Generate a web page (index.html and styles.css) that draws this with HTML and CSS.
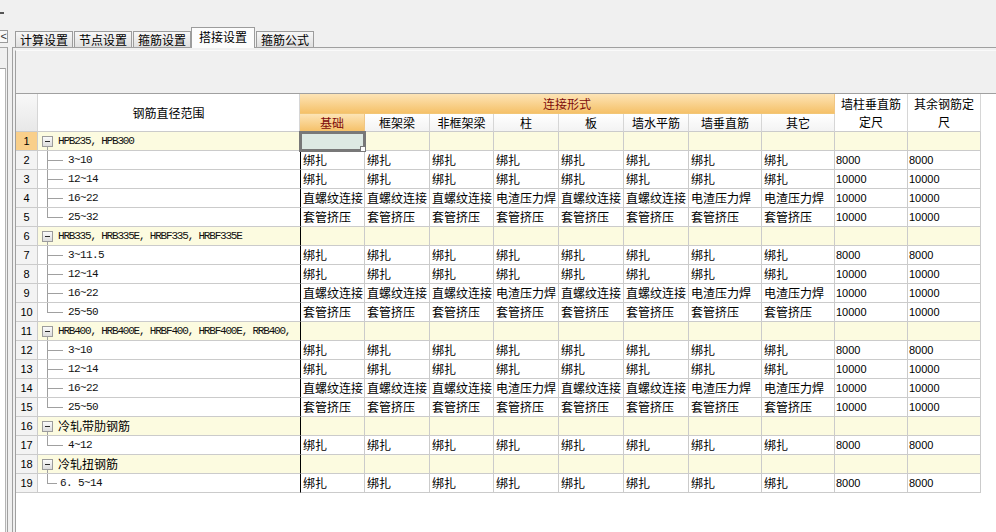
FILE: index.html
```html
<!DOCTYPE html>
<html lang="zh-CN">
<head>
<meta charset="utf-8">
<title>搭接设置</title>
<link rel="stylesheet" href="styles.css">
</head>
<body>
<div class="app">
  <div class="top"><span class="mark"></span></div>
  <div class="work">
    <div class="side">
      <div class="side-btn">&lt;</div>
      <div class="side-panel"><div class="side-list"></div></div>
    </div>
    <div class="tabs-area">
      <div class="tabstrip">
        <div class="tab">计算设置</div>
        <div class="tab">节点设置</div>
        <div class="tab">箍筋设置</div>
        <div class="tab active">搭接设置</div>
        <div class="tab">箍筋公式</div>
      </div>
      <div class="tabpanel">
        <div class="inner">
          <div class="toolbar"></div>
          <div class="gridwrap">
            <div class="grid">
              <div class="c h h-rn"></div>
              <div class="c h h-nm">钢筋直径范围</div>
              <div class="c h h-band org">连接形式</div>
              <div class="c h h-tall"><span>墙柱垂直筋<br>定尺</span></div>
              <div class="c h h-tall"><span>其余钢筋定<br>尺</span></div>
              <div class="c h org">基础</div>
              <div class="c h">框架梁</div>
              <div class="c h">非框架梁</div>
              <div class="c h">柱</div>
              <div class="c h">板</div>
              <div class="c h">墙水平筋</div>
              <div class="c h">墙垂直筋</div>
              <div class="c h">其它</div>

              <!-- 1 -->
              <div class="c rn cur">1</div>
              <div class="c nm g"><span class="tg"><i class="bx"></i></span><span class="lt">HPB235, HPB300</span></div>
              <div class="c d1 g sel"></div><div class="c g"></div><div class="c g"></div><div class="c g"></div><div class="c g"></div><div class="c g"></div><div class="c g"></div><div class="c g"></div><div class="c g"></div><div class="c g"></div>
              <!-- 2 -->
              <div class="c rn">2</div>
              <div class="c nm"><i class="br"></i><span class="lt ch">3~10</span></div>
              <div class="c d1">绑扎</div><div class="c">绑扎</div><div class="c">绑扎</div><div class="c">绑扎</div><div class="c">绑扎</div><div class="c">绑扎</div><div class="c">绑扎</div><div class="c">绑扎</div><div class="c n">8000</div><div class="c n">8000</div>
              <!-- 3 -->
              <div class="c rn">3</div>
              <div class="c nm"><i class="br"></i><span class="lt ch">12~14</span></div>
              <div class="c d1">绑扎</div><div class="c">绑扎</div><div class="c">绑扎</div><div class="c">绑扎</div><div class="c">绑扎</div><div class="c">绑扎</div><div class="c">绑扎</div><div class="c">绑扎</div><div class="c n">10000</div><div class="c n">10000</div>
              <!-- 4 -->
              <div class="c rn">4</div>
              <div class="c nm"><i class="br"></i><span class="lt ch">16~22</span></div>
              <div class="c d1">直螺纹连接</div><div class="c">直螺纹连接</div><div class="c">直螺纹连接</div><div class="c">电渣压力焊</div><div class="c">直螺纹连接</div><div class="c">直螺纹连接</div><div class="c">电渣压力焊</div><div class="c">电渣压力焊</div><div class="c n">10000</div><div class="c n">10000</div>
              <!-- 5 -->
              <div class="c rn">5</div>
              <div class="c nm"><i class="br last"></i><span class="lt ch">25~32</span></div>
              <div class="c d1">套管挤压</div><div class="c">套管挤压</div><div class="c">套管挤压</div><div class="c">套管挤压</div><div class="c">套管挤压</div><div class="c">套管挤压</div><div class="c">套管挤压</div><div class="c">套管挤压</div><div class="c n">10000</div><div class="c n">10000</div>
              <!-- 6 -->
              <div class="c rn">6</div>
              <div class="c nm g"><span class="tg"><i class="bx"></i></span><span class="lt">HRB335, HRB335E, HRBF335, HRBF335E</span></div>
              <div class="c d1 g"></div><div class="c g"></div><div class="c g"></div><div class="c g"></div><div class="c g"></div><div class="c g"></div><div class="c g"></div><div class="c g"></div><div class="c g"></div><div class="c g"></div>
              <!-- 7 -->
              <div class="c rn">7</div>
              <div class="c nm"><i class="br"></i><span class="lt ch">3~11.5</span></div>
              <div class="c d1">绑扎</div><div class="c">绑扎</div><div class="c">绑扎</div><div class="c">绑扎</div><div class="c">绑扎</div><div class="c">绑扎</div><div class="c">绑扎</div><div class="c">绑扎</div><div class="c n">8000</div><div class="c n">8000</div>
              <!-- 8 -->
              <div class="c rn">8</div>
              <div class="c nm"><i class="br"></i><span class="lt ch">12~14</span></div>
              <div class="c d1">绑扎</div><div class="c">绑扎</div><div class="c">绑扎</div><div class="c">绑扎</div><div class="c">绑扎</div><div class="c">绑扎</div><div class="c">绑扎</div><div class="c">绑扎</div><div class="c n">10000</div><div class="c n">10000</div>
              <!-- 9 -->
              <div class="c rn">9</div>
              <div class="c nm"><i class="br"></i><span class="lt ch">16~22</span></div>
              <div class="c d1">直螺纹连接</div><div class="c">直螺纹连接</div><div class="c">直螺纹连接</div><div class="c">电渣压力焊</div><div class="c">直螺纹连接</div><div class="c">直螺纹连接</div><div class="c">电渣压力焊</div><div class="c">电渣压力焊</div><div class="c n">10000</div><div class="c n">10000</div>
              <!-- 10 -->
              <div class="c rn">10</div>
              <div class="c nm"><i class="br last"></i><span class="lt ch">25~50</span></div>
              <div class="c d1">套管挤压</div><div class="c">套管挤压</div><div class="c">套管挤压</div><div class="c">套管挤压</div><div class="c">套管挤压</div><div class="c">套管挤压</div><div class="c">套管挤压</div><div class="c">套管挤压</div><div class="c n">10000</div><div class="c n">10000</div>
              <!-- 11 -->
              <div class="c rn">11</div>
              <div class="c nm g"><span class="tg"><i class="bx"></i></span><span class="lt">HRB400, HRB400E, HRBF400, HRBF400E, RRB400,</span></div>
              <div class="c d1 g"></div><div class="c g"></div><div class="c g"></div><div class="c g"></div><div class="c g"></div><div class="c g"></div><div class="c g"></div><div class="c g"></div><div class="c g"></div><div class="c g"></div>
              <!-- 12 -->
              <div class="c rn">12</div>
              <div class="c nm"><i class="br"></i><span class="lt ch">3~10</span></div>
              <div class="c d1">绑扎</div><div class="c">绑扎</div><div class="c">绑扎</div><div class="c">绑扎</div><div class="c">绑扎</div><div class="c">绑扎</div><div class="c">绑扎</div><div class="c">绑扎</div><div class="c n">8000</div><div class="c n">8000</div>
              <!-- 13 -->
              <div class="c rn">13</div>
              <div class="c nm"><i class="br"></i><span class="lt ch">12~14</span></div>
              <div class="c d1">绑扎</div><div class="c">绑扎</div><div class="c">绑扎</div><div class="c">绑扎</div><div class="c">绑扎</div><div class="c">绑扎</div><div class="c">绑扎</div><div class="c">绑扎</div><div class="c n">10000</div><div class="c n">10000</div>
              <!-- 14 -->
              <div class="c rn">14</div>
              <div class="c nm"><i class="br"></i><span class="lt ch">16~22</span></div>
              <div class="c d1">直螺纹连接</div><div class="c">直螺纹连接</div><div class="c">直螺纹连接</div><div class="c">电渣压力焊</div><div class="c">直螺纹连接</div><div class="c">直螺纹连接</div><div class="c">电渣压力焊</div><div class="c">电渣压力焊</div><div class="c n">10000</div><div class="c n">10000</div>
              <!-- 15 -->
              <div class="c rn">15</div>
              <div class="c nm"><i class="br last"></i><span class="lt ch">25~50</span></div>
              <div class="c d1">套管挤压</div><div class="c">套管挤压</div><div class="c">套管挤压</div><div class="c">套管挤压</div><div class="c">套管挤压</div><div class="c">套管挤压</div><div class="c">套管挤压</div><div class="c">套管挤压</div><div class="c n">10000</div><div class="c n">10000</div>
              <!-- 16 -->
              <div class="c rn">16</div>
              <div class="c nm g"><span class="tg"><i class="bx"></i></span><span>冷轧带肋钢筋</span></div>
              <div class="c d1 g"></div><div class="c g"></div><div class="c g"></div><div class="c g"></div><div class="c g"></div><div class="c g"></div><div class="c g"></div><div class="c g"></div><div class="c g"></div><div class="c g"></div>
              <!-- 17 -->
              <div class="c rn">17</div>
              <div class="c nm"><i class="br last"></i><span class="lt ch">4~12</span></div>
              <div class="c d1">绑扎</div><div class="c">绑扎</div><div class="c">绑扎</div><div class="c">绑扎</div><div class="c">绑扎</div><div class="c">绑扎</div><div class="c">绑扎</div><div class="c">绑扎</div><div class="c n">8000</div><div class="c n">8000</div>
              <!-- 18 -->
              <div class="c rn">18</div>
              <div class="c nm g"><span class="tg"><i class="bx"></i></span><span>冷轧扭钢筋</span></div>
              <div class="c d1 g"></div><div class="c g"></div><div class="c g"></div><div class="c g"></div><div class="c g"></div><div class="c g"></div><div class="c g"></div><div class="c g"></div><div class="c g"></div><div class="c g"></div>
              <!-- 19 -->
              <div class="c rn">19</div>
              <div class="c nm"><i class="br last short"></i><span class="lt ch">6. 5~14</span></div>
              <div class="c d1">绑扎</div><div class="c">绑扎</div><div class="c">绑扎</div><div class="c">绑扎</div><div class="c">绑扎</div><div class="c">绑扎</div><div class="c">绑扎</div><div class="c">绑扎</div><div class="c n">8000</div><div class="c n">8000</div>
            </div>
          </div>
        </div>
      </div>
    </div>
  </div>
</div>
</body>
</html>
```

FILE: styles.css
```css
* { box-sizing: border-box; }
html, body { margin: 0; padding: 0; }
body {
  width: 996px;
  height: 532px;
  overflow: hidden;
  background: #f0f0f0;
  font-family: "Noto Sans CJK SC", "Noto Sans", sans-serif;
  font-size: 12px;
  color: #000;
}
.app { display: flex; flex-direction: column; height: 532px; }

.top { height: 28px; flex: none; padding-top: 12px; }
.mark { display: block; width: 4px; height: 2px; background: #555; }

.work { flex: 1; display: flex; min-height: 0; }

/* left collapsed panel */
.side { width: 12px; flex: none; display: flex; flex-direction: column; }
.side-btn {
  margin-top: 2px;
  width: 8px;
  height: 13px;
  border: 1px solid #9a9a9a;
  border-left: none;
  background: #f8f8f8;
  font: 11px/11px "Liberation Sans", sans-serif;
  color: #333;
  text-align: right;
  overflow: hidden;
}
.side-panel {
  margin-top: 4px;
  width: 8px;
  flex: 1;
  display: flex;
  border-top: 1px solid #a8a8a8;
  border-right: 1px solid #a0a0a0;
  padding-top: 20px;
}
.side-list {
  width: 6px;
  flex: none;
  background: #fff;
  border-top: 1px solid #a0a0a0;
  border-right: 1px solid #b4b4b4;
}

/* tabs */
.tabs-area { flex: 1; display: flex; flex-direction: column; min-width: 0; }
.tabstrip {
  height: 19px;
  flex: none;
  display: flex;
  align-items: flex-end;
  padding-left: 3px;
  position: relative;
  z-index: 1;
}
.tab {
  height: 16px;
  padding: 0 4px;
  margin-right: 1px;
  border: 1px solid #9c9c9c;
  border-bottom: none;
  background: linear-gradient(#f7f7f7, #e0e0e0);
  line-height: 15px;
  white-space: nowrap;
}
.tab.active {
  height: 21px;
  margin: 0 1px -1px -1px;
  padding: 0 7px;
  background: #fcfcfc;
  line-height: 17px;
}
.tabpanel {
  flex: 1;
  display: flex;
  min-height: 0;
  border-top: 1px solid #a0a0a0;
  border-left: 1px solid #a0a0a0;
  padding: 2px 0 0 2px;
  background: #f0f0f0;
}
.inner {
  flex: 1;
  display: flex;
  flex-direction: column;
  min-width: 0;
  border-left: 1px solid #a0a0a0;
  border-top: 1px solid #fafafa;
}
.toolbar { height: 42px; flex: none; background: #f0f0f0; }
.gridwrap {
  flex: 1;
  background: #fff;
  border-top: 1px solid #a0a0a0;
  overflow: hidden;
}

/* grid */
.grid {
  display: grid;
  grid-template-columns: 22px 262px 65px 65px 64px 65px 65px 65px 73px 73px 73px 73px;
  grid-template-rows: 20px 18px;
  grid-auto-rows: 19px;
  width: max-content;
}
.c {
  border-right: 1px solid #cbcbcb;
  border-bottom: 1px solid #cbcbcb;
  display: flex;
  align-items: center;
  padding-left: 2px;
  white-space: nowrap;
  overflow: hidden;
  line-height: 16px;
}
.h {
  justify-content: center;
  padding: 0;
  text-align: center;
  background: linear-gradient(#ffffff, #f3f3f3);
  border-right-color: #d6d6d6;
}
.h-rn { grid-row: span 2; background: linear-gradient(#f8f8f8, #e8e8e8); }
.h-nm { grid-row: span 2; background: #fff; }
.h-band { grid-column: span 8; }
.h-tall { grid-row: span 2; line-height: 18px; background: #fff; }
.org {
  background: linear-gradient(#fde4b6, #f5c169);
  color: #7d0b0b;
  border-right-color: #f0c684;
  border-bottom-color: #f2c676;
}

.rn {
  justify-content: center;
  padding: 0;
  background: #f3f3f3;
  font: 11px "Liberation Sans", sans-serif;
}
.rn.cur { background: #f9cf8a; }
.g { background: #fcfbe0; }
.nm { border-right: none; }
.d1 { border-left: 1px solid #000; }
.n { font: 11px "Liberation Sans", sans-serif; padding-left: 1px; }

.lt {
  font: 11px "Liberation Mono", monospace;
  letter-spacing: -1.2px;
  color: #111;
}
.lt.ch { letter-spacing: -0.6px; }

/* tree */
.tg {
  align-self: stretch;
  flex: none;
  width: 11px;
  margin-left: 2px;
  margin-right: 5px;
  display: flex;
  align-items: center;
  background: linear-gradient(#a0a0a0, #a0a0a0) 5px 100% / 1px 50% no-repeat;
}
.bx {
  display: block;
  width: 11px;
  height: 11px;
  border: 1px solid #9c9c9c;
  background:
    linear-gradient(#2a2a2a, #2a2a2a) center / 5px 1px no-repeat,
    linear-gradient(#fbfbfb, #dcdcdc);
}
.br {
  align-self: stretch;
  flex: none;
  width: 16px;
  margin-left: 7px;
  margin-right: 5px;
  background:
    linear-gradient(#a0a0a0, #a0a0a0) 0 0 / 1px 100% no-repeat,
    linear-gradient(#a0a0a0, #a0a0a0) 0 50% / 100% 1px no-repeat;
}
.br.last { background-size: 1px 50%, 100% 1px; }
.br.short { width: 10px; margin-right: 3px; }

/* current cell */
.sel {
  position: relative;
  overflow: visible;
  background: #dde9e3;
  outline: 3px solid #787878;
  outline-offset: -2px;
}
.sel::after {
  content: "";
  position: absolute;
  right: -2px;
  bottom: -2px;
  width: 4px;
  height: 4px;
  background: #fff;
  border: 1px solid #787878;
}
```
